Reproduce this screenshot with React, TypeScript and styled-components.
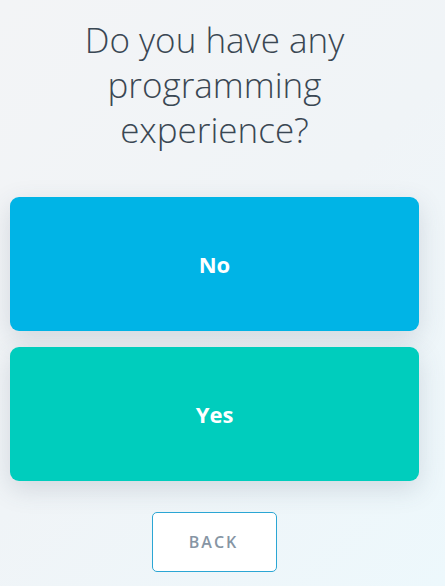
import React from "react";
import styled, { createGlobalStyle } from "styled-components";

const Global = createGlobalStyle`
  html, body { margin: 0; padding: 0; }
  body {
    width: 445px;
    height: 586px;
    overflow: hidden;
    font-family: "Open Sans", "Liberation Sans", sans-serif;
    background: linear-gradient(135deg, #f3f4f6 0%, #f0f4f7 50%, #edf8fc 100%);
  }
`;

const Page = styled.main`
  box-sizing: border-box;
  width: 445px;
  height: 586px;
  padding: 17px 26px 0 10px;
  display: flex;
  flex-direction: column;
  align-items: stretch;
`;

const Title = styled.h1`
  margin: 0 auto;
  max-width: 300px;
  text-align: center;
  font-family: "Open Sans", sans-serif;
  font-weight: 300;
  font-size: 35px;
  line-height: 45px;
  color: #3a4753;
`;

const Choices = styled.div`
  margin-top: 45px;
  display: flex;
  flex-direction: column;
  gap: 16px;
`;

const Choice = styled.button<{ $bg: string }>`
  height: 134px;
  border: none;
  border-radius: 9px;
  background: ${(p) => p.$bg};
  color: #ffffff;
  font-family: "Open Sans", sans-serif;
  font-weight: 700;
  font-size: 22px;
  box-shadow: 0 8px 26px rgba(60, 80, 100, 0.17);
  cursor: pointer;
`;

const Back = styled.button`
  align-self: center;
  margin-top: 31px;
  width: 125px;
  height: 60px;
  box-sizing: border-box;
  background: #ffffff;
  border: 1px solid #2ba6d4;
  border-radius: 5px;
  color: #8695a4;
  font-family: "Open Sans", sans-serif;
  font-weight: 600;
  font-size: 16px;
  letter-spacing: 2px;
  padding-left: 4px;
  cursor: pointer;
`;

export default function App() {
  return (
    <>
      <Global />
      <Page>
        <Title>Do you have any programming experience?</Title>
        <Choices>
          <Choice $bg="#00b4e6">No</Choice>
          <Choice $bg="#00cdbd">Yes</Choice>
        </Choices>
        <Back>BACK</Back>
      </Page>
    </>
  );
}
